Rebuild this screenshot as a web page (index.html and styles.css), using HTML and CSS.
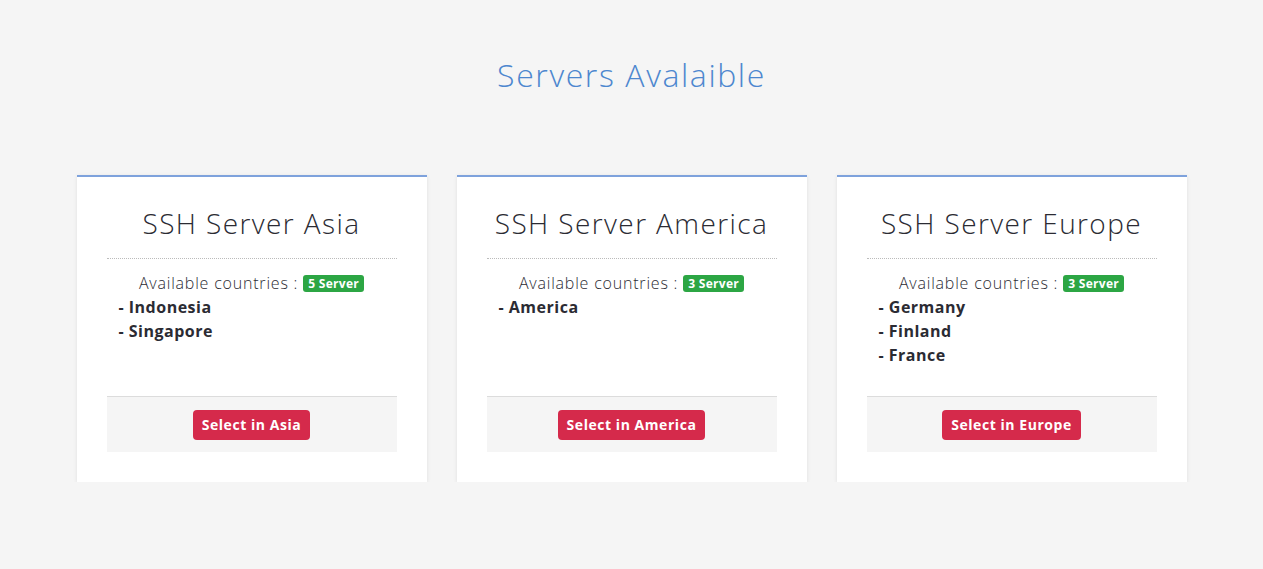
FILE: index.html
```html
<!DOCTYPE html>
<html lang="en">
<head>
<meta charset="utf-8">
<title>Servers Avalaible</title>
<link rel="stylesheet" href="styles.css">
</head>
<body>
<section class="servers">
  <h2 class="servers-title">Servers Avalaible</h2>
  <div class="container">
    <div class="row">
      <div class="card">
        <div class="card-body">
          <h3 class="card-title">SSH Server Asia</h3>
          <hr class="divider">
          <p class="available">Available countries : <span class="badge">5 Server</span></p>
          <ul class="countries">
            <li>- Indonesia</li>
            <li>- Singapore</li>
          </ul>
        </div>
        <div class="card-footer"><a class="btn" href="#">Select in Asia</a></div>
      </div>
      <div class="card">
        <div class="card-body">
          <h3 class="card-title">SSH Server America</h3>
          <hr class="divider">
          <p class="available">Available countries : <span class="badge">3 Server</span></p>
          <ul class="countries">
            <li>- America</li>
          </ul>
        </div>
        <div class="card-footer"><a class="btn" href="#">Select in America</a></div>
      </div>
      <div class="card">
        <div class="card-body">
          <h3 class="card-title">SSH Server Europe</h3>
          <hr class="divider">
          <p class="available">Available countries : <span class="badge">3 Server</span></p>
          <ul class="countries">
            <li>- Germany</li>
            <li>- Finland</li>
            <li>- France</li>
          </ul>
        </div>
        <div class="card-footer"><a class="btn" href="#">Select in Europe</a></div>
      </div>
    </div>
  </div>
</section>
</body>
</html>
```
FILE: styles.css
```css
* { box-sizing: border-box; }
body {
  margin: 0;
  background: #f5f5f5;
  font-family: "Open Sans", "Liberation Sans", sans-serif;
  color: #2b2b33;
}
.servers { padding-top: 55px; }
.servers-title {
  margin: 0 0 80px;
  text-align: center;
  font-size: 32px;
  line-height: 40px;
  font-weight: 300;
  letter-spacing: 1.6px;
  color: #4d87cf;
}
.container {
  width: 1140px;
  margin: 0 auto;
  padding: 0 15px;
}
.row { display: flex; gap: 30px; }
.card {
  flex: 1;
  background: #fff;
  border-top: 2px solid #7ea2dc;
  padding: 0 30px 30px;
  box-shadow: 0 1px 4px rgba(0,0,0,0.09);
}
.card-body { height: 219px; padding-top: 26px; }
.card-title {
  margin: 0;
  text-align: center;
  font-size: 28px;
  line-height: 40px;
  font-weight: 300;
  letter-spacing: 1.4px;
  color: #2b2b33;
}
.divider {
  margin: 15px 0 12px;
  border: 0;
  border-top: 1px dotted #bbb;
}
.available {
  margin: 0;
  text-align: center;
  font-size: 16px;
  line-height: 24px;
  font-weight: 300;
  letter-spacing: 0.8px;
}
.badge {
  display: inline-block;
  background: #2ca644;
  color: #fff;
  font-size: 12px;
  font-weight: 700;
  line-height: 17px;
  padding: 0 5px;
  border-radius: 3px;
  letter-spacing: 0.3px;
  vertical-align: 1px;
}
.countries {
  list-style: none;
  margin: 0;
  padding: 0 0 0 12px;
  font-size: 16px;
  line-height: 24px;
  font-weight: 700;
  letter-spacing: 0.5px;
}
.card-footer {
  height: 56px;
  background: #f5f5f5;
  border-top: 1px solid #dcdcdc;
  display: flex;
  align-items: center;
  justify-content: center;
}
.btn {
  display: inline-block;
  background: #d52a4b;
  color: #fff;
  text-decoration: none;
  font-size: 14px;
  font-weight: 700;
  line-height: 30px;
  padding: 0 9px;
  letter-spacing: 0.55px;
  border-radius: 4px;
}
```
